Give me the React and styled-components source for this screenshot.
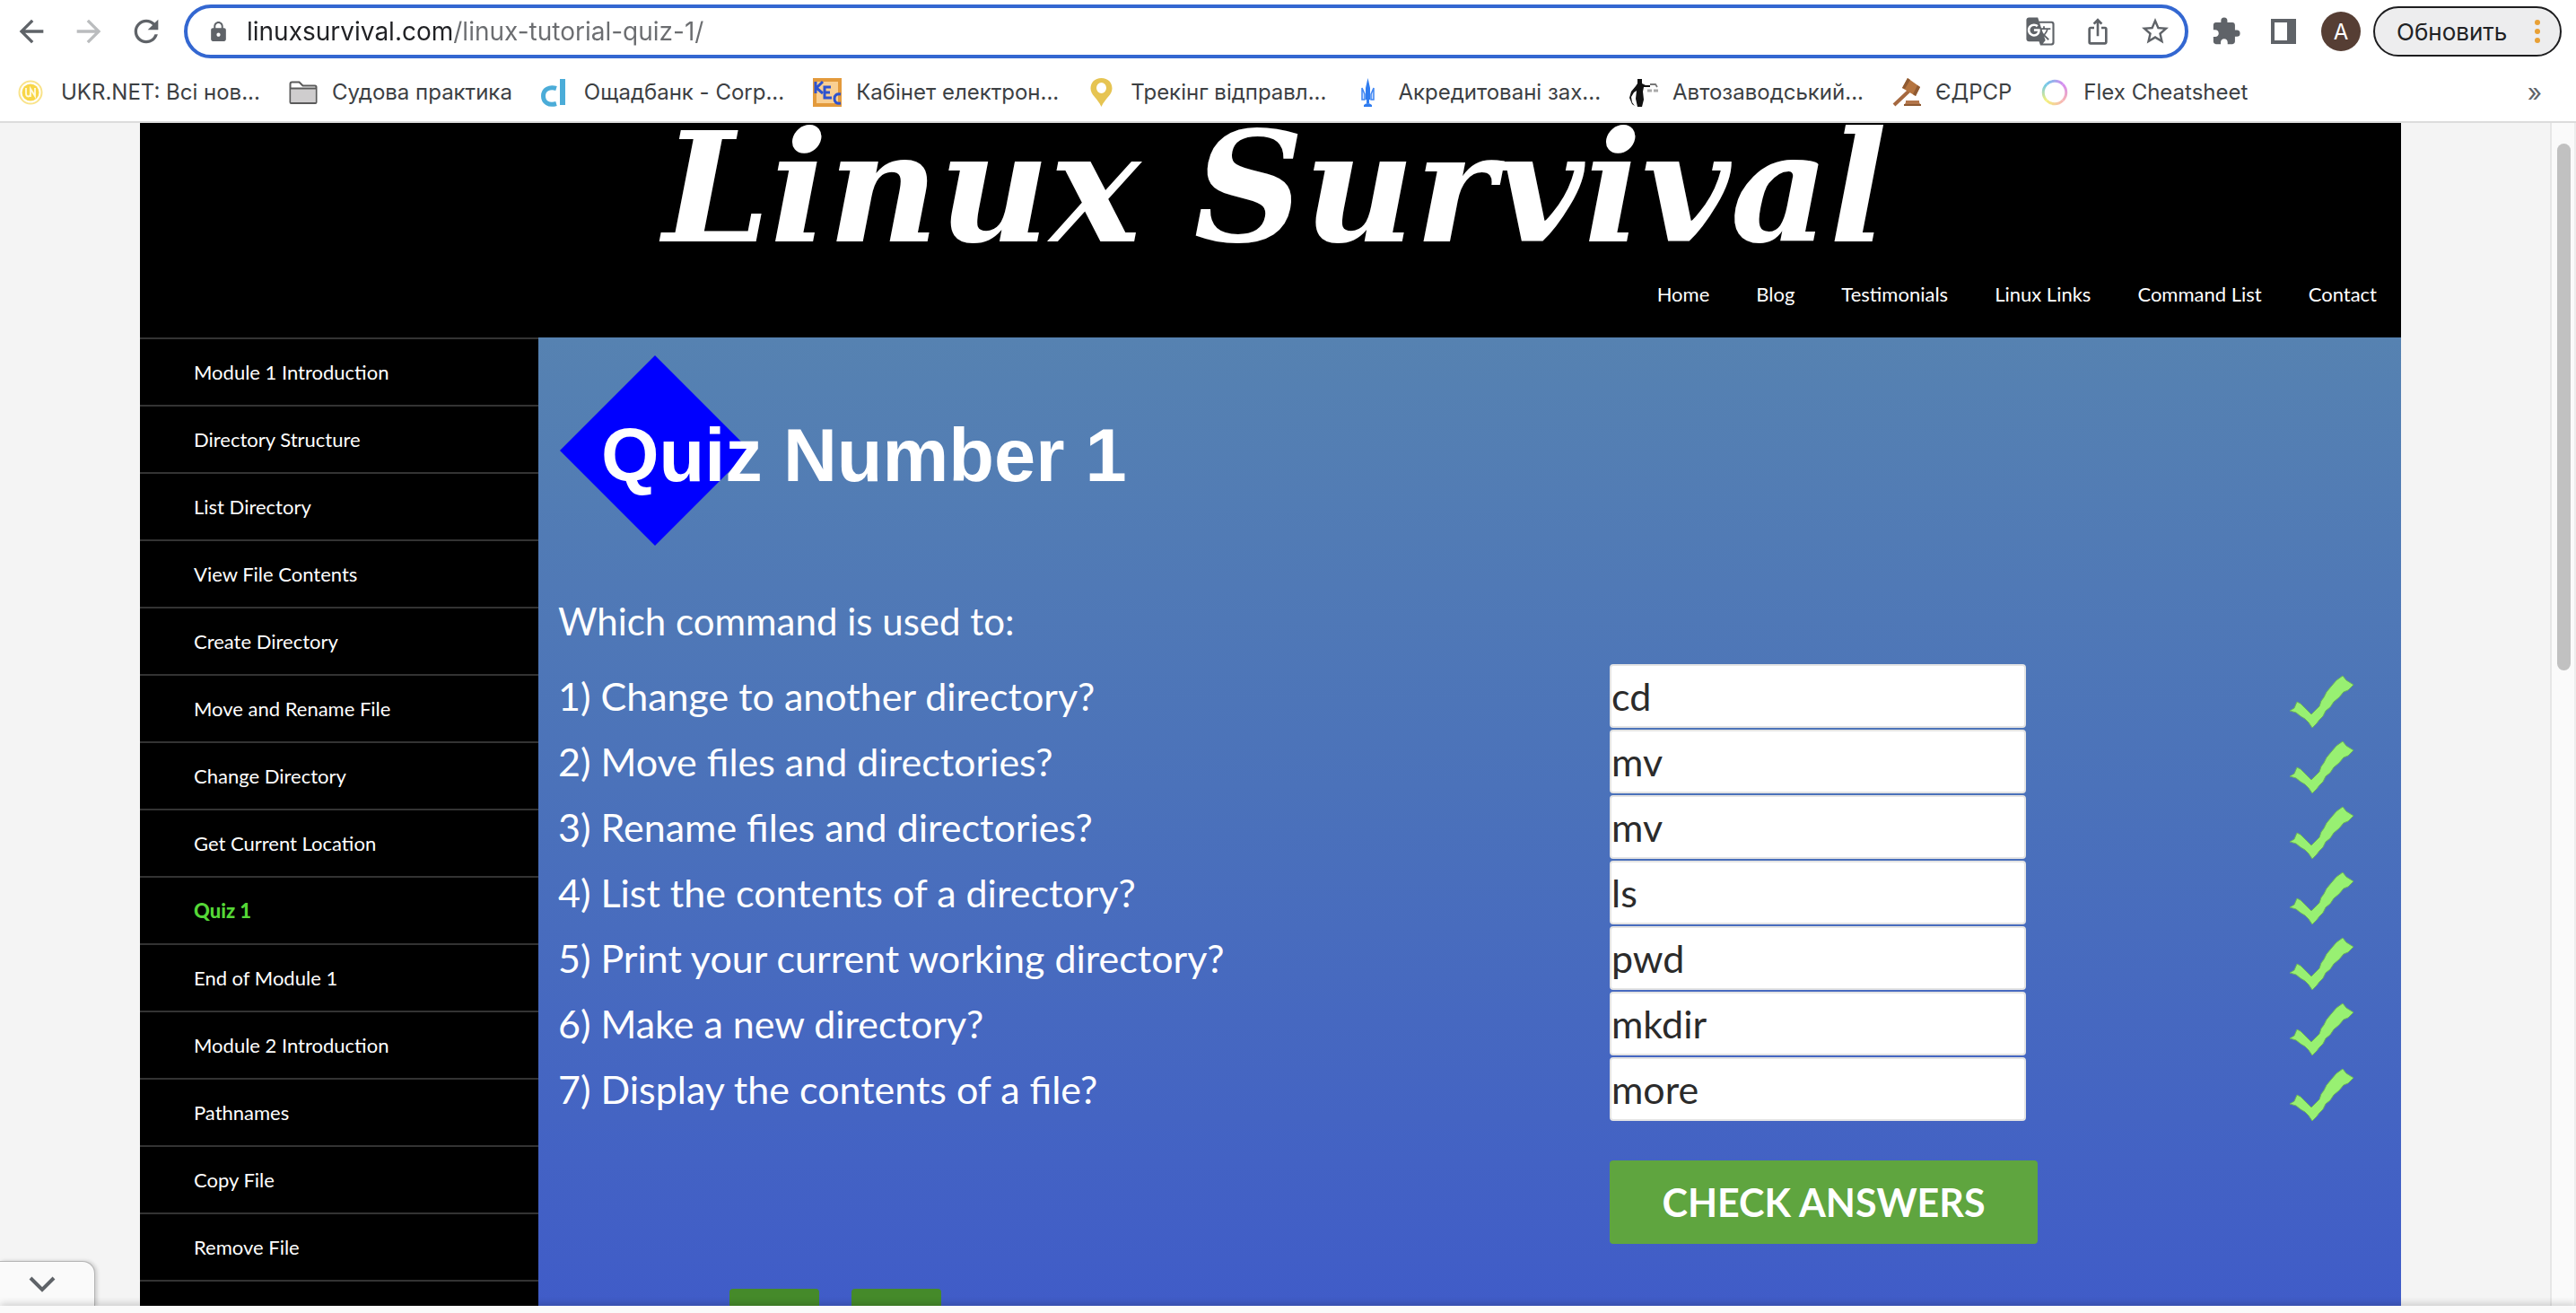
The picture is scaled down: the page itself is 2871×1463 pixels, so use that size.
import React from "react";
import styled, { createGlobalStyle } from "styled-components";
import {
  MdArrowBack,
  MdArrowForward,
  MdRefresh,
  MdLock,
  MdGTranslate,
  MdIosShare,
  MdStarBorder,
  MdExtension,
} from "react-icons/md";

const uiFont = `Inter, Roboto, "Noto Sans", sans-serif`;
const siteFont = `Lato, "Noto Sans", sans-serif`;

const GlobalStyle = createGlobalStyle`
  *, *::before, *::after { box-sizing: border-box; }
  html, body { margin: 0; padding: 0; }
  body { overflow: hidden; background: #fff; font-family: ${siteFont}; }
  button, input { font: inherit; }
  a { color: inherit; text-decoration: none; }
  ul { margin: 0; padding: 0; list-style: none; }
  svg { display: block; flex: none; }
`;

const Window = styled.div`
  display: flex;
  flex-direction: column;
  height: 100vh;
`;

/* ---------- browser chrome ---------- */

const Chrome = styled.header`
  flex: none;
  background: #fff;
  border-bottom: 2px solid #dcdcdc;
  font-family: ${uiFont};
`;

const Toolbar = styled.div`
  display: flex;
  align-items: center;
  height: 70px;
  padding: 0 16px 0 3px;
`;

const IconButton = styled.button`
  flex: none;
  display: flex;
  align-items: center;
  justify-content: center;
  width: 64px;
  height: 48px;
  padding: 0;
  border: 0;
  background: none;
  color: ${(p) => (p.$muted ? "#babcbe" : "#5f6368")};
`;

const AddressBar = styled.label`
  flex: 1;
  display: flex;
  align-items: center;
  height: 60px;
  margin: 0 10px 0 10px;
  padding: 0 1px 0 22px;
  border: 4px solid #3367d1;
  border-radius: 30px;
  color: #5f6368;
`;

const AddressInput = styled.input`
  flex: 1;
  min-width: 0;
  height: 44px;
  margin-left: 19px;
  padding: 0;
  border: 0;
  outline: 0;
  font-size: 28px;
  color: #202124;
  background: linear-gradient(90deg, #202124 229px, #6b6d70 229px);
  background-clip: text;
  -webkit-background-clip: text;
  -webkit-text-fill-color: transparent;
`;

const Avatar = styled.span`
  display: flex;
  align-items: center;
  justify-content: center;
  width: 44px;
  height: 44px;
  border-radius: 50%;
  background: #563e34;
  color: #fff;
  font-size: 24px;
`;

const UpdateButton = styled.button`
  flex: none;
  display: flex;
  align-items: center;
  justify-content: space-between;
  width: 210px;
  height: 56px;
  margin-left: 4px;
  padding: 0 22px 0 24px;
  border: 2px solid #1d1d1f;
  border-radius: 28px;
  background: #ededee;
  color: #202124;
  font-size: 26px;
`;

const Bookmarks = styled.nav`
  display: flex;
  align-items: center;
  justify-content: space-between;
  height: 65px;
  padding: 0 38px 0 20px;
`;

const BookmarkList = styled.ul`
  display: flex;
  gap: 32px;
`;

const Bookmark = styled.a`
  display: flex;
  align-items: center;
  gap: 16px;
  font-size: 24px;
  line-height: 32px;
  color: #3c4043;
  white-space: nowrap;
`;

const MoreButton = styled.button`
  padding: 0;
  border: 0;
  background: none;
  color: #5f6368;
  font-size: 28px;
  line-height: 32px;
`;

/* ---------- viewport ---------- */

const Viewport = styled.div`
  position: relative;
  flex: 1;
  min-height: 0;
  display: flex;
  background: #fafafa;
`;

const Page = styled.div`
  flex: 1;
  min-width: 0;
  overflow: hidden;
  padding-right: 10px;
  background: #f4f4f4;
`;

const Site = styled.div`
  display: flex;
  flex-direction: column;
  max-width: 2520px;
  min-height: 100%;
  margin: 0 auto;
  background: #000;
  color: #fff;
`;

const Masthead = styled.div`
  flex: none;
  overflow: hidden;
  height: 239px;
`;

const SiteTitle = styled.h1`
  margin: 0;
  padding: 10px 0 0 10px;
  font-family: "DejaVu Serif", serif;
  font-size: 170px;
  font-weight: 700;
  font-style: italic;
  line-height: 124px;
  text-align: center;
  white-space: nowrap;
`;

const SiteNav = styled.ul`
  display: flex;
  justify-content: flex-end;
  gap: 52px;
  padding: 41px 27px 0 0;
  font-size: 22px;
  line-height: 32px;
`;

const Columns = styled.div`
  flex: 1;
  display: flex;
`;

const Sidebar = styled.nav`
  flex: none;
  width: 444px;
`;

const ModuleItem = styled.li`
  height: 75px;
  border-top: 2px solid #333;
`;

const ModuleLink = styled.a`
  display: block;
  padding: 20px 0 0 60px;
  font-size: 22px;
  line-height: 34px;
  color: ${(p) => (p.$current ? "#55d737" : "#fff")};
  font-weight: ${(p) => (p.$current ? 900 : 400)};
`;

const Main = styled.main`
  flex: 1;
  min-width: 0;
  padding: 20px 48px 0 22px;
  background: linear-gradient(#5682b1 0, #4b72ba 500px, #405cc8 1079px);
  font-size: 43px;
`;

const QuizBanner = styled.svg`
  width: 640px;
  height: 212px;
`;

const Prompt = styled.p`
  margin: 0;
  padding: 56px 0 20px;
  font-size: 42px;
  line-height: 56px;
`;

const QuizRow = styled.div`
  display: grid;
  grid-template-columns: minmax(0, 1fr) 757px 77px;
  height: 73px;
`;

const Question = styled.label`
  line-height: 72px;
  white-space: nowrap;
`;

const Answer = styled.input`
  width: 464px;
  height: 71px;
  padding: 0;
  border: 2px solid #e4e4e4;
  border-radius: 4px;
  background: #fff;
  color: #2b2b2b;
`;

const Tick = styled.svg`
  width: 74px;
  height: 60px;
  margin-top: 12px;
`;

const SubmitRow = styled(QuizRow)`
  height: auto;
  padding-top: 42px;
`;

const CheckButton = styled.button`
  grid-column: 2;
  justify-self: start;
  width: 477px;
  height: 93px;
  padding: 0;
  border: 0;
  border-radius: 4px;
  background: #5fa53f;
  color: #fff;
  font-weight: 700;
  line-height: 56px;
`;

const Pager = styled.div`
  display: flex;
  gap: 36px;
  padding: 50px 0 0 191px;
`;

const PagerButton = styled.button`
  width: 100px;
  height: 93px;
  border: 0;
  border-radius: 4px;
  background: #458a2a;
`;

const Scrollbar = styled.div`
  flex: none;
  width: 29px;
  padding: 23px 4px 0 6px;
  border-left: 2px solid #e6e6e6;
  border-right: 2px solid #ededed;
  background: #fafafa;
`;

const Thumb = styled.div`
  height: 587px;
  border-radius: 8px;
  background: #c1c1c1;
`;

const ShelfToggle = styled.button`
  position: absolute;
  left: 0;
  bottom: 0;
  width: 106px;
  height: 50px;
  padding: 0 11px 0 0;
  display: flex;
  align-items: center;
  justify-content: center;
  border: 0;
  border-top: 1px solid #b4b4b4;
  border-right: 1px solid #b4b4b4;
  border-top-right-radius: 14px;
  background: #fafafa;
  box-shadow: 2px 0 4px rgba(0, 0, 0, 0.18);
`;

const BottomEdge = styled.div`
  flex: none;
  position: relative;
  height: 8px;
  background: #fafafa;
  box-shadow: 0 -2px 8px rgba(0, 0, 0, 0.2);
`;

/* ---------- drawings ---------- */

const icon = { width: 32, height: 32, viewBox: "0 0 32 32", "aria-hidden": true };

const SidePanelIcon = () => (
  <svg width="28" height="28" viewBox="0 0 28 28" aria-hidden="true">
    <path fill="#5f6368" fillRule="evenodd" d="M0 0h28v28H0zM4 4v20h14V4z" />
  </svg>
);

const UkrNetIcon = () => (
  <svg {...icon}>
    <circle cx="14" cy="16" r="12.5" fill="#fff" stroke="#f9e38a" strokeWidth="2" />
    <circle cx="14" cy="16" r="9.5" fill="#f8d648" />
    <path d="M9 11v6q0 3.500 2.500 3.500t2.500-3.500v-5M14 21v-9l5 8v-9" fill="none" stroke="#fffbe0" strokeWidth="1.8" />
  </svg>
);

const FolderIcon = () => (
  <svg {...icon}>
    <path d="M1.5 27V6.5q0-2 2-2h8l4 4H29q1.500 0 1.500 1.500V27q0 1-1 1h-27q-1 0-1-1z" fill="#fff" stroke="#5a5a5a" strokeWidth="2" />
    <path d="M2.500 12h27v15h-27z" fill="#cfcdce" />
    <path d="M1.500 11.500h29" stroke="#5a5a5a" strokeWidth="2" />
  </svg>
);

const OschadIcon = () => (
  <svg {...icon}>
    <path d="M17 11.500C9 9 2.500 13 2.500 20s6 11 14.500 8.500" fill="none" stroke="#4bacd8" strokeWidth="5" />
    <path d="M21 1h6v29h-6z" fill="#4bacd8" />
  </svg>
);

const KecIcon = () => (
  <svg {...icon}>
    <path d="M0 0h32v32H0z" fill="#e39a3b" />
    <path d="M4 4h24v24H4z" fill="#f9cf92" />
    <g fill="none" stroke="#2d53cf" strokeWidth="3">
      <path d="M3 4v13M11 4l-7 7 7 6" />
      <path d="M20 10h-7v12h8M13 16h6" />
      <path d="M31 18q-7-1-7 5t7 5" />
    </g>
  </svg>
);

const PinIcon = () => (
  <svg {...icon}>
    <path fill="#e6c452" fillRule="evenodd" d="M15.500 0C8 0 3.500 5 3.500 11.500 3.500 19 11 22 15.500 32 20 22 27.500 19 27.500 11.500 27.500 5 23 0 15.500 0zm0 5a5.500 6 0 1 1 0 12 5.500 6 0 0 1 0-12z" />
  </svg>
);

const TridentIcon = () => (
  <svg {...icon}>
    <path d="M14.500 0l2.500 11v13h-5V11z" fill="#2f7cf0" />
    <path d="M8 11l3 7v6H8zM21 11l-3 7v6h3z" fill="#cfe0ff" stroke="#3f86f2" strokeWidth="1.500" />
    <path d="M10 30q4.500-4 9 0v2h-9zM13 24h3v4h-3z" fill="#2f7cf0" />
  </svg>
);

const JusticeIcon = () => (
  <svg {...icon}>
    <path d="M9 1h5v5l4 2h5v2h-7l-1 5 1 9-2 8h-5l-2-9 1-9-3 2-3 5 1 6 3 4-3-2-3-7 2-7 5-6 2-3z" fill="#111" />
    <path d="M23 7l6 0 2 3" fill="none" stroke="#777" strokeWidth="1.800" />
    <path d="M20 14h5M27 14h5" stroke="#aaa" strokeWidth="3" />
  </svg>
);

const GavelIcon = () => (
  <svg {...icon}>
    <path d="M19 14L2 30" stroke="#a5683f" strokeWidth="4" />
    <path d="M17 0l14 10-5 10-15-9z" fill="#b5743f" />
    <path d="M17 0l3 2-6 10-3-1zM28 8l3 2-5 10-3-2z" fill="#8f5a32" />
    <path d="M15 25h15v2l2 4H13l2-4z" fill="#b3764b" />
    <path d="M13 29h19v2H13z" fill="#8f5a32" />
  </svg>
);

const RingIcon = () => (
  <svg {...icon}>
    <defs>
      <linearGradient id="ringTop" x1="0" y1="0" x2="1" y2="0">
        <stop offset="0" stopColor="#6fc8e8" />
        <stop offset="1" stopColor="#d58bf0" />
      </linearGradient>
      <linearGradient id="ringRight" x1="0" y1="0" x2="0" y2="1">
        <stop offset="0" stopColor="#d58bf0" />
        <stop offset="1" stopColor="#f7b5b5" />
      </linearGradient>
      <linearGradient id="ringBottom" x1="0" y1="0" x2="1" y2="0">
        <stop offset="0" stopColor="#f3f07c" />
        <stop offset="1" stopColor="#f7b5b5" />
      </linearGradient>
      <linearGradient id="ringLeft" x1="0" y1="0" x2="0" y2="1">
        <stop offset="0" stopColor="#6fc8e8" />
        <stop offset="1" stopColor="#f3f07c" />
      </linearGradient>
    </defs>
    <g fill="none" strokeWidth="3">
      <path d="M7 7a12.700 12.700 0 0 1 18 0" stroke="url(#ringTop)" />
      <path d="M25 7a12.700 12.700 0 0 1 0 18" stroke="url(#ringRight)" />
      <path d="M25 25a12.700 12.700 0 0 1-18 0" stroke="url(#ringBottom)" />
      <path d="M7 25a12.700 12.700 0 0 1 0-18" stroke="url(#ringLeft)" />
    </g>
  </svg>
);

const Dots = () => (
  <svg width="6" height="28" viewBox="0 0 6 28" fill="#e8a035" aria-hidden="true">
    <circle cx="3" cy="4" r="3" />
    <circle cx="3" cy="14" r="3" />
    <circle cx="3" cy="24" r="3" />
  </svg>
);

const CheckMark = () => (
  <Tick viewBox="0 0 74 60" role="img" aria-label="Correct">
    <path
      d="M1 40L6 37 9 30 13 32 17 36 21 40 25 44 29 40 34 35 36 29 39 25 42 19 47 13 53 6 60 1 64 6 72 11 66 17 61 19 56 25 50 30 46 36 41 40 38 46 34 50 31 54 26 59 22 53 18 49 13 46 8 42z"
      fill="#98f072"
      stroke="#6cb45a"
      strokeWidth="1"
      strokeLinejoin="round"
    />
  </Tick>
);

/* ---------- data ---------- */

const bookmarks = [
  ["UKR.NET: Всі нов...", UkrNetIcon],
  ["Судова практика", FolderIcon],
  ["Ощадбанк - Corp...", OschadIcon],
  ["Кабінет електрон...", KecIcon],
  ["Трекінг відправл...", PinIcon],
  ["Акредитовані зах...", TridentIcon],
  ["Автозаводський...", JusticeIcon],
  ["ЄДРСР", GavelIcon],
  ["Flex Cheatsheet", RingIcon],
];

const siteLinks = ["Home", "Blog", "Testimonials", "Linux Links", "Command List", "Contact"];

const modules = [
  "Module 1 Introduction",
  "Directory Structure",
  "List Directory",
  "View File Contents",
  "Create Directory",
  "Move and Rename File",
  "Change Directory",
  "Get Current Location",
  "Quiz 1",
  "End of Module 1",
  "Module 2 Introduction",
  "Pathnames",
  "Copy File",
  "Remove File",
];

const questions = [
  ["1) Change to another directory?", "cd"],
  ["2) Move files and directories?", "mv"],
  ["3) Rename files and directories?", "mv"],
  ["4) List the contents of a directory?", "ls"],
  ["5) Print your current working directory?", "pwd"],
  ["6) Make a new directory?", "mkdir"],
  ["7) Display the contents of a file?", "more"],
];

export default function App() {
  return (
    <Window>
      <GlobalStyle />
      <Chrome>
        <Toolbar>
          <IconButton aria-label="Back"><MdArrowBack size={40} /></IconButton>
          <IconButton aria-label="Forward" $muted><MdArrowForward size={40} /></IconButton>
          <IconButton aria-label="Reload"><MdRefresh size={40} /></IconButton>
          <AddressBar>
            <MdLock size={25} />
            <AddressInput aria-label="Address" defaultValue="linuxsurvival.com/linux-tutorial-quiz-1/" />
            <IconButton aria-label="Translate"><MdGTranslate size={34} /></IconButton>
            <IconButton aria-label="Share"><MdIosShare size={32} /></IconButton>
            <IconButton aria-label="Bookmark this page"><MdStarBorder size={36} /></IconButton>
          </AddressBar>
          <IconButton aria-label="Extensions"><MdExtension size={34} /></IconButton>
          <IconButton aria-label="Side panel"><SidePanelIcon /></IconButton>
          <IconButton aria-label="Profile"><Avatar>A</Avatar></IconButton>
          <UpdateButton>Обновить<Dots /></UpdateButton>
        </Toolbar>
        <Bookmarks aria-label="Bookmarks">
          <BookmarkList>
            {bookmarks.map(([label, Icon]) => (
              <li key={label}>
                <Bookmark href="#"><Icon />{label}</Bookmark>
              </li>
            ))}
          </BookmarkList>
          <MoreButton aria-label="More bookmarks">»</MoreButton>
        </Bookmarks>
      </Chrome>

      <Viewport>
        <Page>
          <Site>
            <Masthead>
              <SiteTitle>Linux Survival</SiteTitle>
              <SiteNav>
                {siteLinks.map((label) => (
                  <li key={label}><a href="#">{label}</a></li>
                ))}
              </SiteNav>
            </Masthead>
            <Columns>
              <Sidebar aria-label="Modules">
                <ul>
                  {modules.map((label) => (
                    <ModuleItem key={label}>
                      <ModuleLink href="#" $current={label === "Quiz 1"}>{label}</ModuleLink>
                    </ModuleItem>
                  ))}
                  <ModuleItem />
                </ul>
              </Sidebar>
              <Main>
                <QuizBanner viewBox="0 0 640 212" role="img" aria-label="Quiz Number 1">
                  <path d="M108 0L214 106 108 212 2 106z" fill="#00f" />
                  <text x="48" y="140" fill="#fff" fontFamily="Liberation Sans, Arial, sans-serif" fontWeight="700" fontSize="83">
                    Quiz Number 1
                  </text>
                </QuizBanner>
                <form onSubmit={(e) => e.preventDefault()}>
                  <Prompt>Which command is used to:</Prompt>
                  {questions.map(([question, answer], i) => (
                    <QuizRow key={question}>
                      <Question htmlFor={`answer-${i}`}>{question}</Question>
                      <div><Answer id={`answer-${i}`} defaultValue={answer} /></div>
                      <CheckMark />
                    </QuizRow>
                  ))}
                  <SubmitRow>
                    <CheckButton>CHECK ANSWERS</CheckButton>
                  </SubmitRow>
                </form>
                <Pager>
                  <PagerButton aria-label="Previous" />
                  <PagerButton aria-label="Next" />
                </Pager>
              </Main>
            </Columns>
          </Site>
        </Page>
        <Scrollbar><Thumb /></Scrollbar>
        <ShelfToggle aria-label="Show more">
          <svg width="30" height="18" viewBox="0 0 30 18" aria-hidden="true">
            <path d="M2 2l13 13L28 2" fill="none" stroke="#5f6368" strokeWidth="4" />
          </svg>
        </ShelfToggle>
      </Viewport>
      <BottomEdge />
    </Window>
  );
}
